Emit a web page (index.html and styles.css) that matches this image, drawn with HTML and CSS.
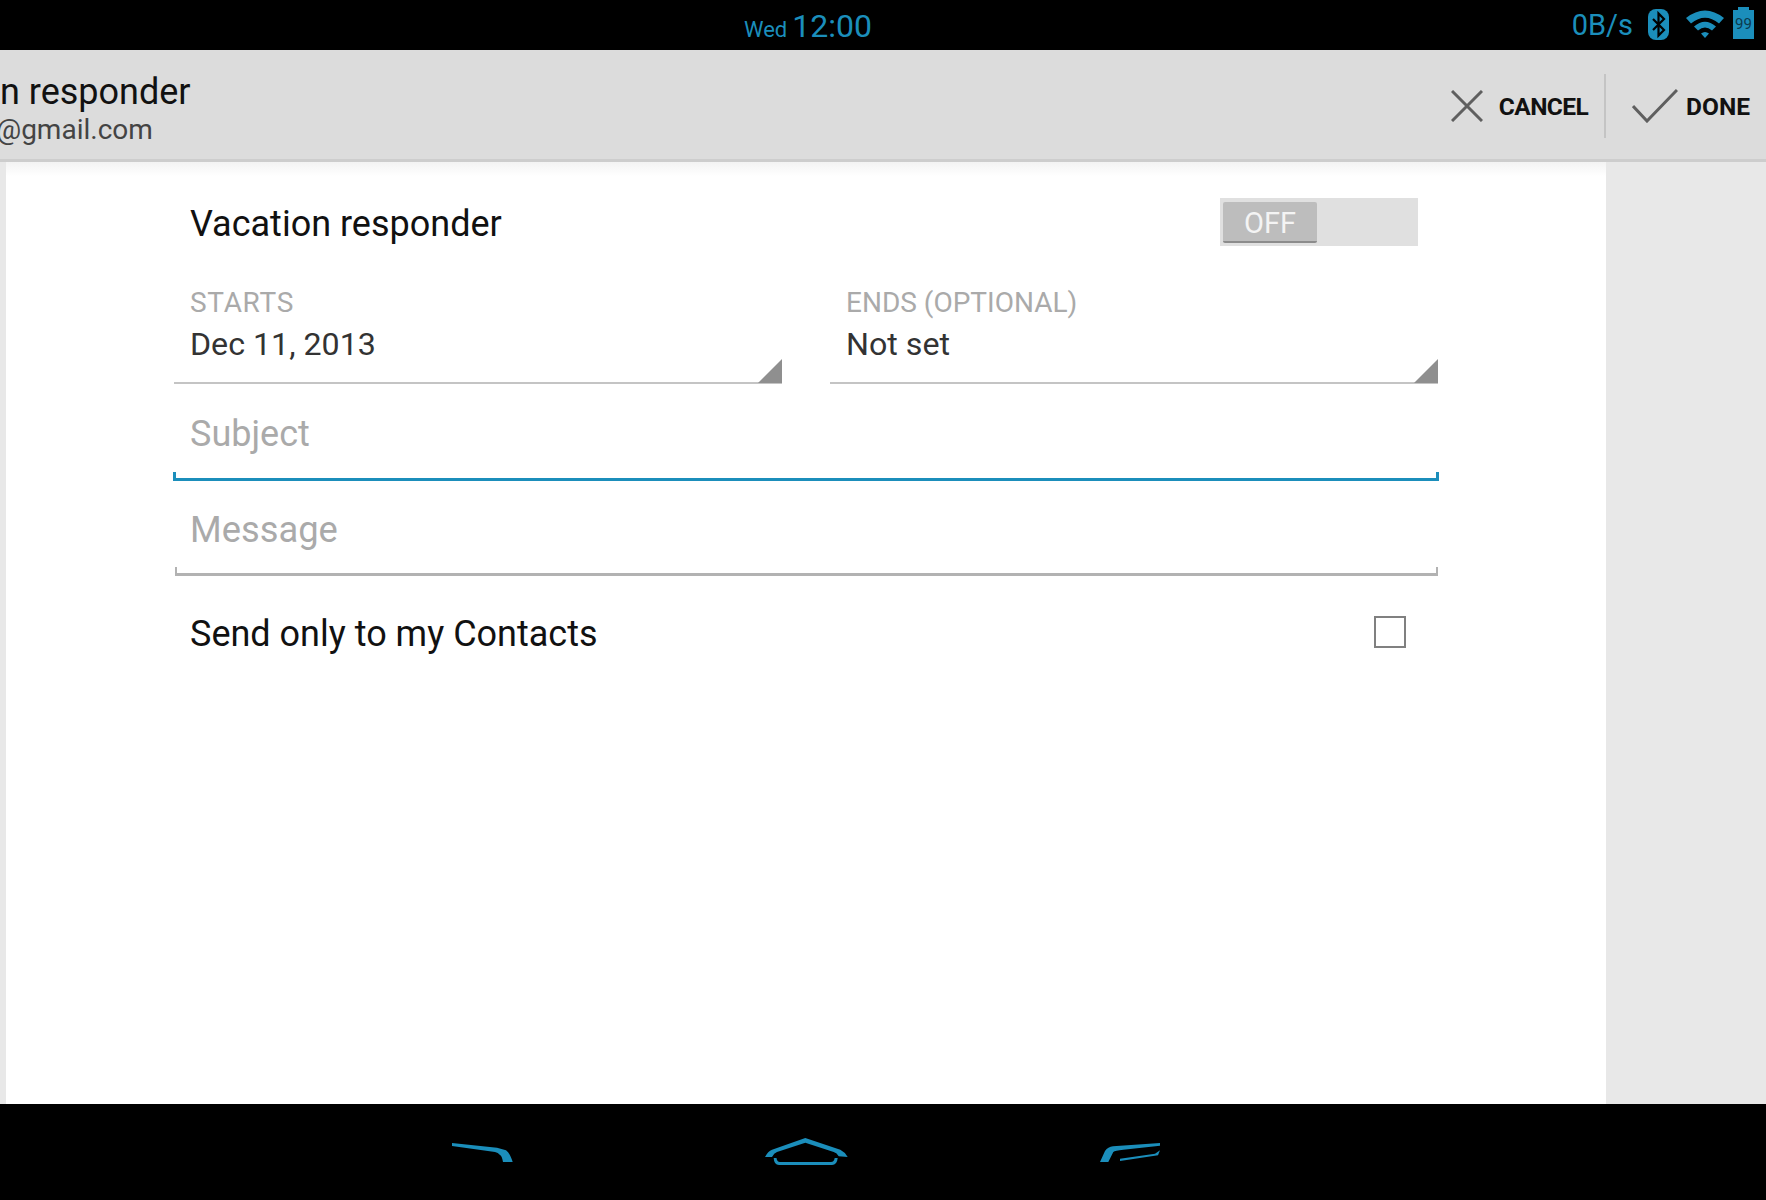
FILE: index.html
```html
<!DOCTYPE html>
<html lang="en">
<head>
<meta charset="utf-8">
<title>Vacation responder</title>
<link rel="stylesheet" href="styles.css">
</head>
<body>
<div class="screen">
  <header class="status-bar">
    <div class="clock"><span class="day">Wed</span><span class="time">12:00</span></div>
    <div class="status-right">
      <span class="speed">0B/s</span>
      <svg class="ic-bt" width="21" height="31" viewBox="0 0 21 31"><rect width="21" height="31" rx="8" fill="#1b8ebb"/><path d="M5 10l11 11-5.500 5.500v-22L16 10 5 21" fill="none" stroke="#000" stroke-width="2.200"/></svg>
      <svg class="ic-wifi" width="38" height="30" viewBox="0 0 38 30"><path d="M0 9Q19 -6 38 9L33 14.500Q19 3 5 14.500zM8 17.500Q19 8 30 17.500L26 21.500Q19 15.500 12 21.500zM15 24.500Q19 21.500 23 24.500L19 29z" fill="#1b8ebb"/></svg>
      <div class="battery"><span class="battery-nub"></span><span class="battery-body">99</span></div>
    </div>
  </header>

  <div class="action-bar">
    <div class="titles">
      <div class="title">n responder</div>
      <div class="subtitle">@gmail.com</div>
    </div>
    <div class="actions">
      <div class="action action-cancel">
        <svg width="32" height="32" viewBox="0 0 32 32"><path d="M1 1l30 30M31 1L1 31" fill="none" stroke="#5f5f5f" stroke-width="3"/></svg>
        <span>CANCEL</span>
      </div>
      <div class="action-divider"></div>
      <div class="action action-done">
        <svg width="46" height="34" viewBox="0 0 46 34"><path d="M1 17l14 15L45 1" fill="none" stroke="#5f5f5f" stroke-width="3"/></svg>
        <span>DONE</span>
      </div>
    </div>
  </div>

  <main class="content">
    <div class="gutter gutter-left"></div>
    <section class="panel">
      <form class="form">
        <div class="row-toggle">
          <span class="row-label">Vacation responder</span>
          <div class="switch"><span class="switch-thumb">OFF</span></div>
        </div>
        <div class="dates">
          <div class="date-col">
            <div class="caption caption-wide">STARTS</div>
            <div class="spinner">Dec 11, 2013</div>
          </div>
          <div class="date-col">
            <div class="caption">ENDS (OPTIONAL)</div>
            <div class="spinner">Not set</div>
          </div>
        </div>
        <div class="field field-focus"><span class="placeholder">Subject</span></div>
        <div class="field field-message"><span class="placeholder">Message</span></div>
        <div class="row-check">
          <span class="row-label">Send only to my Contacts</span>
          <span class="checkbox"></span>
        </div>
      </form>
    </section>
    <div class="gutter gutter-right"></div>
  </main>

  <nav class="nav-bar">
    <svg class="nav-back" width="61" height="19" viewBox="0 0 61 19"><path d="M0 0L45 4.700L54 7.300Q58 10 60.700 19H51Q50 13 48 12Q46 9.500 43 9L0 3z" fill="#1b8ebb"/></svg>
    <svg class="nav-home" width="83" height="27" viewBox="0 0 83 27"><path d="M40.300 0L75.300 11.700Q80 14 82.700 19L73.700 18.300Q72 15 68.700 14L40.300 4.700L12 14Q9 15 7 19H0Q3 13 7 11.700zM8.700 20H11.500Q12 24 15 24H66Q69 24 69.700 20H72.700Q72 27 67 27H14Q9 27 8.700 20z" fill="#1b8ebb"/></svg>
    <svg class="nav-recent" width="60" height="19" viewBox="0 0 60 19"><path d="M60 0V2.700L23.300 6.700Q15 7.500 13.300 9L8.300 19H0L5 8Q8 3.800 13 3.300zM60 7.300L58 12.300L20 18V15.700L55 10.700z" fill="#1b8ebb"/></svg>
  </nav>
</div>
</body>
</html>
```

FILE: styles.css
```css
* { box-sizing: border-box; }
html, body { margin: 0; padding: 0; }
body { width: 1766px; height: 1200px; overflow: hidden; font-family: Roboto, "Liberation Sans", sans-serif; background: #000; }
.screen { width: 1766px; height: 1200px; display: flex; flex-direction: column; }

/* status bar */
.status-bar { height: 50px; flex: none; background: #000; color: #1b8ebb; display: flex; align-items: center; padding: 0 12px 0 744px; }
.clock { display: flex; align-items: baseline; gap: 5px; margin-top: 1px; }
.day { font-size: 22px; }
.time { font-size: 32px; }
.status-right { margin-left: auto; display: flex; align-items: center; }
.speed { font-size: 29px; margin-right: 15px; }
.ic-bt { margin-right: 17px; margin-top: -1px; }
.ic-wifi { margin-right: 9px; margin-top: -2px; }
.battery { width: 21px; height: 32px; display: flex; flex-direction: column; align-items: center; margin-top: -4px; }
.battery-nub { width: 11px; height: 3px; background: #1b8ebb; }
.battery-body { width: 21px; height: 29px; background: #1b8ebb; color: #0b3a4d; font-size: 15px; line-height: 29px; text-align: center; }

/* action bar */
.action-bar { height: 112px; flex: none; background: #dcdcdc; border-bottom: 3px solid #cdcdcd; display: flex; justify-content: space-between; align-items: center; padding-right: 16px; }
.titles { display: flex; flex-direction: column; margin-top: 6px; }
.title { font-size: 36px; line-height: 44px; color: #111; }
.subtitle { font-size: 28px; line-height: 32px; color: #444; margin-left: -4px; }
.actions { display: flex; align-items: center; margin-top: 3px; }
.action { display: flex; align-items: center; font-size: 24.500px; font-weight: 700; color: #111; }
.action-cancel { gap: 16px; letter-spacing: -0.600px; }
.action-done { gap: 8px; }
.action-divider { width: 2px; height: 64px; background: #c4c4c4; margin: 0 26px 0 16px; }

/* content */
.content { flex: 1; display: flex; min-height: 0; background: #e8e8e8; }
.gutter { background: #e8e8e8; }
.gutter-left { width: 6px; flex: none; }
.gutter-right { flex: 1; }
.panel { width: 1600px; flex: none; background: linear-gradient(#f3f3f3, #fff 14px); }
.form { width: 1265px; margin-left: 168px; display: flex; flex-direction: column; }

.row-label { font-size: 36px; color: #111; }
.row-toggle { height: 123px; padding: 36px 21px 0 16px; display: flex; justify-content: space-between; align-items: flex-start; }
.row-toggle .row-label { line-height: 52px; }
.switch { width: 198px; height: 48px; padding: 4px 3px; background: #e0e0e0; }
.switch-thumb { display: block; width: 94px; height: 41px; background: #bdbdbd; border-bottom: 2px solid #8c8c8c; border-radius: 2px; color: #f4f4f4; font-size: 29px; line-height: 43px; text-align: center; }

.dates { display: grid; grid-template-columns: 608px 608px; column-gap: 48px; height: 99px; }
.date-col { position: relative; border-bottom: 2px solid #c4c4c4; padding: 0 16px; }
.date-col::after { content: ""; position: absolute; right: 0; bottom: -1px; width: 24px; height: 24px; background: #8f8f8f; clip-path: polygon(100% 0, 100% 100%, 0 100%); }
.caption { font-size: 28px; line-height: 36px; color: #aaa; }
.caption-wide { letter-spacing: 0.700px; }
.spinner { font-size: 32.200px; line-height: 46px; color: #333; }

.field { position: relative; padding: 0 16px; }
.field::before, .field::after { content: ""; position: absolute; bottom: 0; height: 6px; }
.field::before { left: 0; }
.field::after { right: 0; }
.field-focus { height: 97px; border-bottom: 3px solid #1b8ebb; margin-left: -1px; padding-left: 17px; }
.field-focus::before, .field-focus::after { width: 3px; background: #1b8ebb; }
.field-message { height: 95px; border-bottom: 3px solid #b2b2b2; margin: 0 1px; padding-left: 15px; }
.field-message::before, .field-message::after { width: 2px; background: #b2b2b2; }
.placeholder { display: block; font-size: 36px; line-height: 101px; color: #aaa; }
.field-message .placeholder { line-height: 98px; font-size: 36.300px; }

.row-check { height: 114px; padding: 0 33px 0 16px; display: flex; justify-content: space-between; align-items: center; }
.row-check .row-label { margin-top: 2px; }
.checkbox { width: 32px; height: 32px; border: 2px solid #808080; background: #fff; margin-top: -2px; }

/* nav */
.nav-bar { height: 96px; flex: none; background: #000; display: flex; align-items: flex-start; gap: 252px; padding-left: 452px; }
.nav-back, .nav-recent { margin-top: 39px; }
.nav-home { margin-top: 34px; }
```
